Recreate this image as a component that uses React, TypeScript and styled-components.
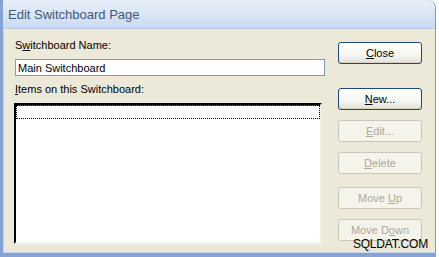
import React from 'react';
import styled, { createGlobalStyle } from 'styled-components';

const GlobalStyle = createGlobalStyle`
  body {
    margin: 0;
    background: #ffffff;
    font-family: 'Liberation Sans', Arial, sans-serif;
  }
`;

const Window = styled.div`
  position: relative;
  width: 436px;
  height: 257px;
  box-sizing: border-box;
  display: flex;
  flex-direction: column;
  background: #ece9d8;
  border-left: 3px solid #86a3d3;
  border-right: 1px solid #7c9acb;
  border-bottom: 4px solid #86a3d3;
  border-top-right-radius: 8px;
  box-shadow: inset 1px 0 0 #c4d4ec, inset 0 -1px 0 #c4d4ec;
  overflow: hidden;
`;

const TitleBar = styled.div`
  height: 29px;
  box-sizing: border-box;
  display: flex;
  align-items: center;
  padding: 1px 0 0 5px;
  background: linear-gradient(#e7eff9, #d9e5f5 55%, #c9d9ef);
  border-bottom: 1px solid #b7c9e3;
  border-top-right-radius: 8px;
`;

const Title = styled.span`
  font-size: 13px;
  color: #3f5878;
`;

const Body = styled.div`
  flex: 1;
  display: flex;
  padding: 10px 0 0 11px;
`;

const LeftColumn = styled.div`
  width: 311px;
  display: flex;
  flex-direction: column;
`;

const RightColumn = styled.div`
  margin-left: 13px;
  width: 84px;
  display: flex;
  flex-direction: column;
`;

const Label = styled.label<{ $mt?: number }>`
  display: block;
  margin-top: ${p => p.$mt ?? 0}px;
  padding-left: 1px;
  font-size: 11px;
  line-height: 13px;
  color: #000;
`;

const NameInput = styled.input`
  margin: 7px 0 0 1px;
  width: 310px;
  height: 17px;
  box-sizing: border-box;
  border: 1px solid #7f9db9;
  padding: 0 0 0 2px;
  font-family: 'Liberation Sans', Arial, sans-serif;
  font-size: 11px;
  color: #000;
  background: #fff;
  outline: none;
`;

const ListBox = styled.div`
  margin-top: 7px;
  width: 308px;
  height: 141px;
  box-sizing: border-box;
  background: #fff;
  border-top: 2px solid #000;
  border-left: 2px solid #000;
  border-right: 2px solid #f1efe2;
  border-bottom: 2px solid #f7f6ef;
  box-shadow: inset 0 1px 0 #716f64;
`;

const FocusRow = styled.div`
  height: 14px;
  width: 100%;
  box-sizing: border-box;
  border: 1px dotted #000;
`;

const Button = styled.button<{ $mt: number }>`
  margin-top: ${p => p.$mt}px;
  width: 84px;
  height: 22px;
  padding: 0;
  box-sizing: border-box;
  border-radius: 3px;
  font-family: 'Liberation Sans', Arial, sans-serif;
  font-size: 11px;
  color: #000;
  border: 1px solid #1c4a7e;
  background: linear-gradient(#ffffff, #f6f6f1 60%, #e3e1d6);
  box-shadow: inset 0 -1px 0 #d6d2c2;

  &:disabled {
    color: #aca899;
    border-color: #c9c7ba;
    background: #f5f4ea;
    box-shadow: none;
  }
`;

const Watermark = styled.div`
  position: absolute;
  right: 7px;
  bottom: 2px;
  font-family: 'Liberation Sans', Arial, sans-serif;
  font-size: 12px;
  color: #000;
  letter-spacing: -0.2px;
`;

export default function App() {
  return (
    <>
      <GlobalStyle />
      <Window>
        <TitleBar>
          <Title>Edit Switchboard Page</Title>
        </TitleBar>
        <Body>
          <LeftColumn>
            <Label>
              S<u>w</u>itchboard Name:
            </Label>
            <NameInput defaultValue="Main Switchboard" />
            <Label $mt={7}>
              <u>I</u>tems on this Switchboard:
            </Label>
            <ListBox>
              <FocusRow />
            </ListBox>
          </LeftColumn>
          <RightColumn>
            <Button $mt={3}>
              <u>C</u>lose
            </Button>
            <Button $mt={24}>
              <u>N</u>ew...
            </Button>
            <Button $mt={10} disabled>
              <u>E</u>dit...
            </Button>
            <Button $mt={10} disabled>
              <u>D</u>elete
            </Button>
            <Button $mt={13} disabled>
              Move <u>U</u>p
            </Button>
            <Button $mt={10} disabled>
              Move D<u>o</u>wn
            </Button>
          </RightColumn>
        </Body>
        <Watermark>SQLDAT.COM</Watermark>
      </Window>
    </>
  );
}
